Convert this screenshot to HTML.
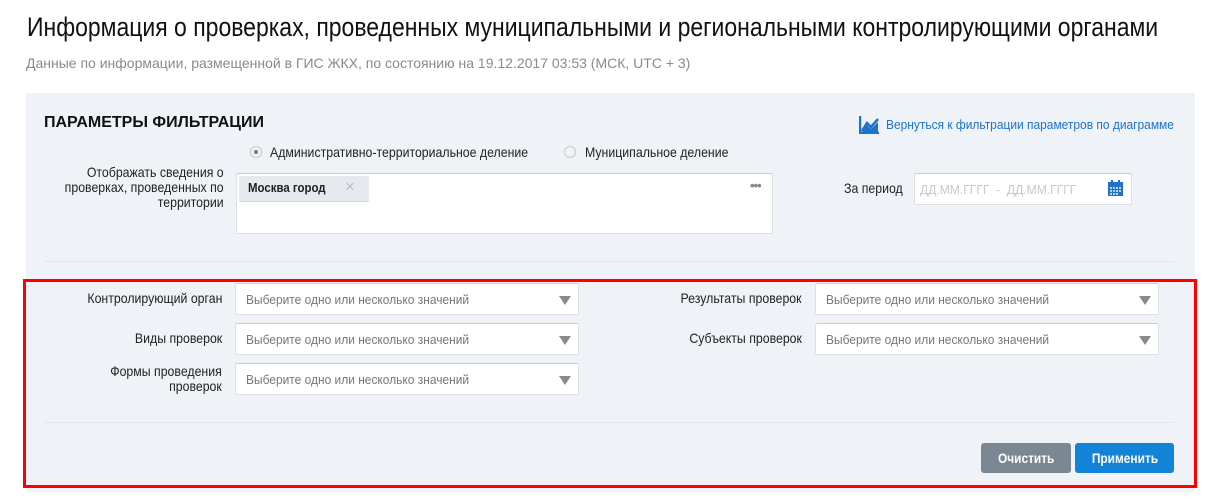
<!DOCTYPE html>
<html><head><meta charset="utf-8"><style>
*{box-sizing:border-box;margin:0;padding:0}
body{width:1211px;height:500px;background:#fff;position:relative;overflow:hidden;font-family:"Liberation Sans","Noto Sans CJK SC",sans-serif;color:#222}
.a{position:absolute;white-space:nowrap}
.cl{transform:scaleX(.88);transform-origin:left top}
.cr{transform:scaleX(.88);transform-origin:right top}
h1{position:absolute;left:27px;top:12px;font-size:27px;font-weight:normal;color:#111;white-space:nowrap;transform:scaleX(.851);transform-origin:left top}
.sub{left:26px;top:55px;font-size:14px;color:#8a8a8a}
.panel{position:absolute;left:26px;top:93px;width:1169px;height:399px;background:#eff2f7}
.red{position:absolute;left:23px;top:279px;width:1174px;height:209px;border:3px solid #f00}
.inp{position:absolute;background:#fff;border:1px solid #dde1e6;border-top-color:#c9cdd2;border-radius:2px}
.sel{height:32px}
.sel span{position:absolute;left:10px;top:8px;font-size:13px;color:#777;white-space:nowrap;transform:scaleX(.92);transform-origin:left top}
.sel:after{content:"";position:absolute;right:7px;top:12px;border-left:6px solid transparent;border-right:6px solid transparent;border-top:9px solid #8a8a8a}
.lbl{font-size:14px;color:#222;text-align:right}
.hr{position:absolute;height:1px;background:#e3e6ea}
.btn{position:absolute;height:30px;top:443px;border-radius:3px;color:#fff;font-size:14px;font-weight:bold;text-align:center;line-height:30px}
.btn span{display:inline-block;transform:scaleX(.85)}
.radio{position:absolute;width:12px;height:12px;border-radius:50%;border:1px solid #c5c8cc;background:#f3f3f3}
</style></head><body>
<h1>Информация о проверках, проведенных муниципальными и региональными контролирующими органами</h1>
<div class="a sub">Данные по информации, размещенной в ГИС ЖКХ, по состоянию на 19.12.2017 03:53 (МСК, UTC + 3)</div>
<div class="panel"></div>
<div class="a" style="left:44px;top:114px;font-size:16px;font-weight:bold;color:#111">ПАРАМЕТРЫ ФИЛЬТРАЦИИ</div>
<svg class="a" style="left:859px;top:116px" width="20" height="18" viewBox="0 0 20 18"><path d="M1 0V17H20" stroke="#1d73c9" stroke-width="2.5" fill="none"/><path d="M3 15L8 7L12 11L19 3" stroke="#1d73c9" stroke-width="2.5" fill="none"/><path d="M3 16L8 9L12 13L19 6V16Z" fill="#1d73c9"/></svg>
<div class="a" style="left:886px;top:117px;font-size:13px;color:#1d73c9;transform:scaleX(.92);transform-origin:left top">Вернуться к фильтрации параметров по диаграмме</div>
<div class="radio" style="left:250px;top:146px"><div style="position:absolute;left:3px;top:3px;width:4px;height:4px;border-radius:50%;background:#777"></div></div>
<div class="a cl" style="left:270px;top:144px;font-size:14px">Административно-территориальное деление</div>
<div class="radio" style="left:564px;top:146px"></div>
<div class="a cl" style="left:585px;top:144px;font-size:14px">Муниципальное деление</div>
<div class="a lbl cr" style="right:987px;top:165px;line-height:15px">Отображать сведения о<br>проверках, проведенных по<br>территории</div>
<div class="inp" style="left:236px;top:173px;width:537px;height:61px"></div>
<div class="a" style="left:239px;top:176px;width:130px;height:26px;background:#e6e9ee;border-radius:2px;border-bottom:1px solid #d0d4d9"></div>
<div class="a cl" style="left:248px;top:180px;font-size:13px;font-weight:bold;color:#222">Москва город</div>
<div class="a" style="left:345px;top:177px;font-size:17px;color:#bbb">×</div>
<div class="a" style="left:750px;top:178px;font-size:13px;color:#888;letter-spacing:-1px;font-weight:bold">•••</div>
<div class="a cl" style="left:844px;top:180px;font-size:14px">За период</div>
<div class="inp" style="left:914px;top:173px;width:218px;height:32px"></div>
<div class="a" style="left:920px;top:182px;font-size:13px;color:#c8c8c8;transform:scaleX(.93);transform-origin:left top">ДД.ММ.ГГГГ &nbsp;- &nbsp;ДД.ММ.ГГГГ</div>
<svg class="a" style="left:1108px;top:180px" width="15" height="16" viewBox="0 0 15 16"><rect x="0" y="2" width="15" height="14" fill="#1d73c9"/><rect x="3" y="0" width="2" height="4" fill="#1d73c9"/><rect x="10" y="0" width="2" height="4" fill="#1d73c9"/><g fill="#b9d2ee"><rect x="2" y="7" width="2" height="2"/><rect x="5" y="7" width="2" height="2"/><rect x="8" y="7" width="2" height="2"/><rect x="11" y="7" width="2" height="2"/><rect x="2" y="10" width="2" height="2"/><rect x="5" y="10" width="2" height="2"/><rect x="8" y="10" width="2" height="2"/><rect x="11" y="10" width="2" height="2"/><rect x="2" y="13" width="2" height="2"/><rect x="5" y="13" width="2" height="2"/><rect x="8" y="13" width="2" height="2"/></g></svg>
<div class="hr" style="left:44px;top:261px;width:1130px"></div>
<div class="red"></div>
<div class="a lbl cr" style="right:989px;top:290px">Контролирующий орган</div>
<div class="inp sel" style="left:235px;top:283px;width:344px"><span>Выберите одно или несколько значений</span></div>
<div class="a lbl cr" style="right:989px;top:330px">Виды проверок</div>
<div class="inp sel" style="left:235px;top:323px;width:344px"><span>Выберите одно или несколько значений</span></div>
<div class="a lbl cr" style="right:989px;top:364px;line-height:15px">Формы проведения<br>проверок</div>
<div class="inp sel" style="left:235px;top:363px;width:344px"><span>Выберите одно или несколько значений</span></div>
<div class="a lbl cr" style="right:409px;top:290px">Результаты проверок</div>
<div class="inp sel" style="left:815px;top:283px;width:344px"><span>Выберите одно или несколько значений</span></div>
<div class="a lbl cr" style="right:409px;top:330px">Субъекты проверок</div>
<div class="inp sel" style="left:815px;top:323px;width:344px"><span>Выберите одно или несколько значений</span></div>
<div class="hr" style="left:44px;top:422px;width:1130px"></div>
<div class="btn" style="left:981px;width:90px;background:#7b8792"><span>Очистить</span></div>
<div class="btn" style="left:1075px;width:99px;background:#1383d8"><span>Применить</span></div>
</body></html>
